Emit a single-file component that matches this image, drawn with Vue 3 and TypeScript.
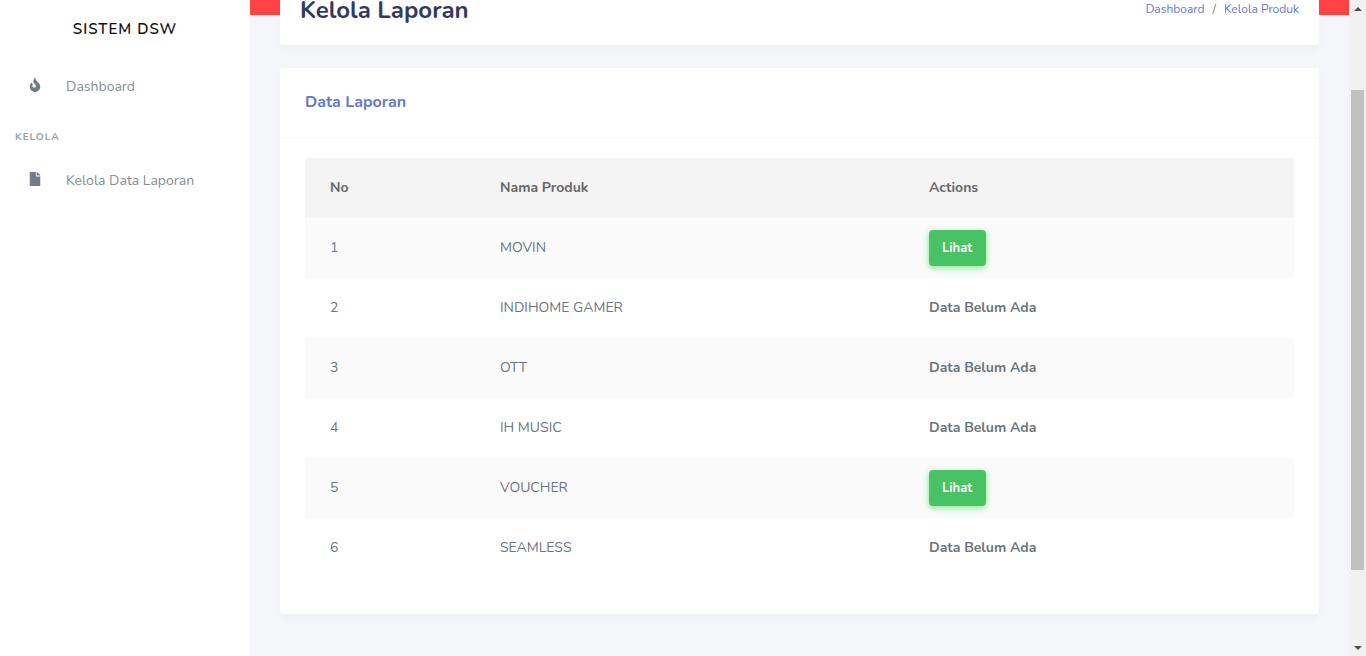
<script setup lang="ts">
interface Product {
  no: number
  name: string
  hasReport: boolean
}

const products: Product[] = [
  { no: 1, name: 'MOVIN', hasReport: true },
  { no: 2, name: 'INDIHOME GAMER', hasReport: false },
  { no: 3, name: 'OTT', hasReport: false },
  { no: 4, name: 'IH MUSIC', hasReport: false },
  { no: 5, name: 'VOUCHER', hasReport: true },
  { no: 6, name: 'SEAMLESS', hasReport: false },
]
</script>

<template>
  <div class="layout">
    <aside class="sidebar">
      <a class="brand" href="#">SISTEM DSW</a>
      <nav class="menu">
        <a class="menu-link" href="#">
          <svg class="menu-icon" viewBox="0 0 384 512" aria-hidden="true">
            <path d="M216 24c0-24-31-33-44-13C48 192 224 200 224 288c0 36-29 64-65 64-35 0-63-30-63-65v-86c0-22-27-32-42-16C28 213 0 261 0 320c0 106 86 192 192 192s192-86 192-192c0-170-168-193-168-296z" />
          </svg>
          <span>Dashboard</span>
        </a>
        <h2 class="menu-header">KELOLA</h2>
        <a class="menu-link" href="#">
          <svg class="menu-icon" viewBox="0 0 384 512" aria-hidden="true">
            <path d="M224 136V0H24C11 0 0 11 0 24v464c0 13 11 24 24 24h336c13 0 24-11 24-24V160H248c-13 0-24-11-24-24zm160-14v6H256V0h6c6 0 13 3 17 7l98 98c4 4 7 11 7 17z" />
          </svg>
          <span>Kelola Data Laporan</span>
        </a>
      </nav>
    </aside>

    <main class="content">
      <header class="page-header">
        <h1>Kelola Laporan</h1>
        <nav class="breadcrumb" aria-label="Breadcrumb">
          <a href="#">Dashboard</a>
          <span>/</span>
          <a href="#">Kelola Produk</a>
        </nav>
      </header>

      <section class="card">
        <div class="card-header">
          <h2>Data Laporan</h2>
        </div>
        <div class="card-body">
          <table>
            <thead>
              <tr>
                <th class="col-no">No</th>
                <th class="col-name">Nama Produk</th>
                <th>Actions</th>
              </tr>
            </thead>
            <tbody>
              <tr v-for="product in products" :key="product.no">
                <td>{{ product.no }}</td>
                <td>{{ product.name }}</td>
                <td>
                  <button v-if="product.hasReport" type="button">Lihat</button>
                  <strong v-else>Data Belum Ada</strong>
                </td>
              </tr>
            </tbody>
          </table>
        </div>
      </section>
    </main>

    <div class="scrollbar" aria-hidden="true">
      <svg class="arrow" viewBox="0 0 17 17"><path d="M5 11h8L9 7z" /></svg>
      <div class="track"><div class="thumb"></div></div>
      <svg class="arrow" viewBox="0 0 17 17"><path d="M5 7h8l-4 4z" /></svg>
    </div>
  </div>
</template>

<style>
body {
  margin: 0;
  background: #f4f6f9;
}
</style>

<style scoped>
.layout {
  display: flex;
  min-height: 100vh;
  color: #6c757d;
  font-family: Nunito, Lato, "Open Sans", sans-serif;
  font-size: 14px;
  line-height: 24px;
}

a {
  text-decoration: none;
}

h1,
h2 {
  margin: 0;
}

.sidebar {
  flex: 0 0 250px;
  background: #fff;
  box-shadow: 0 4px 8px rgba(0, 0, 0, 0.03);
}

.brand {
  display: block;
  color: #111;
  font-size: 15px;
  font-weight: 600;
  letter-spacing: 1px;
  line-height: 58px;
  text-align: center;
}

.menu {
  padding-top: 4px;
}

.menu-link {
  display: flex;
  align-items: center;
  height: 50px;
  padding-left: 28px;
  color: #868e96;
}

.menu-icon {
  width: 14px;
  height: 14px;
  margin: 0 24px 4px 0;
  fill: #727c84;
}

.menu-header {
  padding: 13px 15px 7px;
  color: #98a0a6;
  font-size: 10px;
  font-weight: 700;
  letter-spacing: 1px;
}

.content {
  flex: 1;
  min-width: 0;
  padding: 0 30px;
  background: linear-gradient(#ff4343 15px, #f4f6f9 15px);
}

.page-header {
  display: flex;
  align-items: flex-start;
  justify-content: space-between;
  padding: 0 20px 25px;
  border-radius: 0 0 3px 3px;
  background: #fff;
  box-shadow: 0 4px 8px rgba(0, 0, 0, 0.03);
}

.page-header h1 {
  color: #34395e;
  font-size: 24px;
  font-weight: 700;
  line-height: 20px;
}

.breadcrumb {
  display: flex;
  gap: 8px;
  font-size: 12px;
  line-height: 18px;
}

.breadcrumb a {
  color: #6777ca;
}

.card {
  margin: 23px 0 42px;
  border-radius: 3px;
  background: #fff;
  box-shadow: 0 4px 8px rgba(0, 0, 0, 0.03);
}

.card-header {
  padding: 20px 25px 21px;
  border-bottom: 1px solid #f9f9f9;
}

.card-header h2 {
  color: #6777ca;
  font-size: 16px;
  font-weight: 700;
  line-height: 28px;
}

.card-body {
  padding: 20px 25px 36px;
}

table {
  width: 100%;
  border-collapse: collapse;
  table-layout: fixed;
}

th,
td {
  box-sizing: border-box;
  height: 60px;
  padding: 0 25px;
  text-align: left;
  vertical-align: middle;
}

th {
  background: #f4f4f4;
  color: #666;
  font-weight: 700;
}

.col-no {
  width: 170px;
}

.col-name {
  width: 429px;
}

tbody tr:nth-child(odd) {
  background: #fafafa;
}

button {
  display: block;
  height: 36px;
  padding: 0 14px 0 13px;
  border: 0;
  border-radius: 4px;
  background: #47c363;
  box-shadow: 0 2px 6px #81e696;
  color: #fff;
  font: inherit;
  font-size: 13px;
  font-weight: 700;
}

.scrollbar {
  display: flex;
  flex: 0 0 17px;
  flex-direction: column;
  background: #f1f1f1;
}

.arrow {
  width: 17px;
  height: 17px;
  fill: #505050;
}

.track {
  flex: 1;
  padding: 73px 2px 0;
}

.thumb {
  height: 480px;
  background: #c1c1c1;
}
</style>
